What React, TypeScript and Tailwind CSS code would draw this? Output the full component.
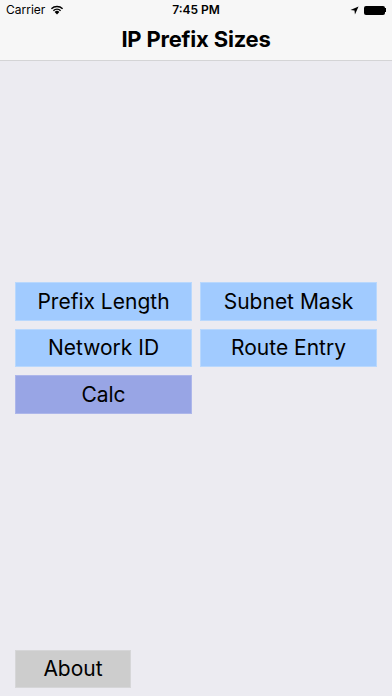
import React from "react";

const font = { fontFamily: "Inter, 'Liberation Sans', sans-serif" };

function Btn({ label, cls }: { label: string; cls: string }) {
  return (
    <div
      className={`h-[38.5px] flex items-center justify-center text-[21px] text-black border ${cls}`}
    >
      {label}
    </div>
  );
}

export default function App() {
  return (
    <div className="w-[392px] h-[696px] bg-[#ecebf1] flex flex-col" style={font}>
      <div className="bg-[#f7f7f7] border-b border-[#d4d4d6] h-[61px] flex flex-col">
        <div className="h-[20px] relative flex items-center px-[6px] text-[12px] text-black">
          <span>Carrier</span>
          <svg width="14" height="10" viewBox="0 0 14 10" className="ml-[5px]">
            <path d="M7 9.5 L4.6 7 A3.4 3.4 0 0 1 9.4 7 Z" fill="black" />
            <path d="M2.9 5.2 A5.9 5.9 0 0 1 11.1 5.2 L10.1 6.2 A4.5 4.5 0 0 0 3.9 6.2 Z" fill="black" />
            <path d="M0.9 3.2 A8.8 8.8 0 0 1 13.1 3.2 L12.1 4.2 A7.4 7.4 0 0 0 1.9 4.2 Z" fill="black" />
          </svg>
          <span className="absolute left-0 right-0 text-center font-semibold">7:45 PM</span>
          <div className="ml-auto flex items-center gap-[5px]">
            <svg width="9" height="9" viewBox="0 0 10 10">
              <path d="M9.5 0.5 L0.5 4.5 L5 5 L5.5 9.5 Z" fill="black" />
            </svg>
            <div className="flex items-center">
              <div className="w-[21px] h-[9px] bg-black rounded-[2px]" />
              <div className="w-[1.5px] h-[4px] bg-black" />
            </div>
          </div>
        </div>
        <div className="flex-1 flex items-center justify-center text-[22px] font-bold text-black pb-[1px] tracking-[-0.2px]">
          IP Prefix Sizes
        </div>
      </div>
      <div className="flex-1 flex flex-col px-[15px]">
        <div className="mt-[221px] grid grid-cols-2 gap-x-[8px] gap-y-[8px]">
          <Btn label="Prefix Length" cls="bg-[#a1cbff] border-[#b9d8fd]" />
          <Btn label="Subnet Mask" cls="bg-[#a1cbff] border-[#b9d8fd]" />
          <Btn label="Network ID" cls="bg-[#a1cbff] border-[#b9d8fd]" />
          <Btn label="Route Entry" cls="bg-[#a1cbff] border-[#b9d8fd]" />
          <Btn label="Calc" cls="bg-[#98a5e5] border-[#adb6ea]" />
        </div>
        <div className="mt-auto mb-[8px] w-[116px]">
          <Btn label="About" cls="bg-[#cdcdcd] border-[#d6d6d8]" />
        </div>
      </div>
    </div>
  );
}
